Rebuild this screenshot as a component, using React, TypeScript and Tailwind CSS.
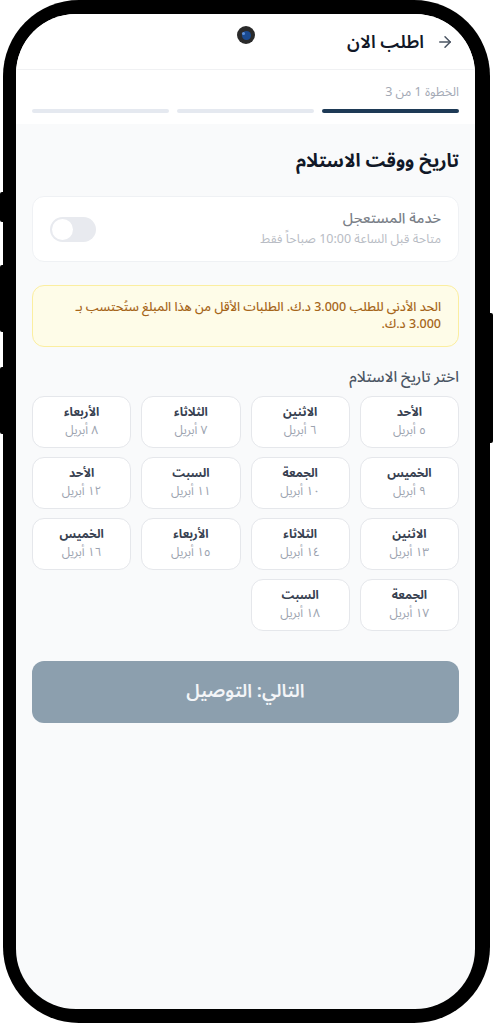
import React from "react";

const days: { d: string; n: string }[] = [
  { d: "الأحد", n: "٥ أبريل" },
  { d: "الاثنين", n: "٦ أبريل" },
  { d: "الثلاثاء", n: "٧ أبريل" },
  { d: "الأربعاء", n: "٨ أبريل" },
  { d: "الخميس", n: "٩ أبريل" },
  { d: "الجمعة", n: "١٠ أبريل" },
  { d: "السبت", n: "١١ أبريل" },
  { d: "الأحد", n: "١٢ أبريل" },
  { d: "الاثنين", n: "١٣ أبريل" },
  { d: "الثلاثاء", n: "١٤ أبريل" },
  { d: "الأربعاء", n: "١٥ أبريل" },
  { d: "الخميس", n: "١٦ أبريل" },
  { d: "الجمعة", n: "١٧ أبريل" },
  { d: "السبت", n: "١٨ أبريل" },
];

export default function App() {
  return (
    <div
      className="relative w-[493px] h-[1024px] bg-white overflow-hidden"
      style={{ fontFamily: '"Noto Sans Arabic", "Noto Sans", "DejaVu Sans", sans-serif' }}
    >
      {/* side buttons */}
      <div className="absolute left-0 top-[192px] w-[6px] h-[30px] bg-black rounded-l-[2px]" />
      <div className="absolute left-0 top-[265px] w-[6px] h-[67px] bg-black rounded-l-[2px]" />
      <div className="absolute left-0 top-[367px] w-[6px] h-[67px] bg-black rounded-l-[2px]" />
      <div className="absolute right-0 top-[313px] w-[6px] h-[130px] bg-black rounded-r-[2px]" />

      <div className="relative ml-[3px] w-[487px] h-[1023px] rounded-[76px] bg-black pt-[14px] pb-[14px] pl-[13px] pr-[15px]">
        <div dir="rtl" className="relative w-full h-full rounded-[60px] bg-[#f9fafb] overflow-hidden flex flex-col">
          {/* camera */}
          <div className="absolute left-[221px] top-[12px] w-[18px] h-[18px] rounded-full bg-[#2a2a2a] flex items-center justify-center z-10">
            <div className="w-[9px] h-[9px] rounded-full bg-[#1a4a8f] flex items-start justify-end">
              <div className="w-[3px] h-[3px] rounded-full bg-[#5b8fd8] mt-[1px] mr-[1px]" />
            </div>
          </div>

          {/* header */}
          <div className="h-[56px] bg-white border-b border-[#f0f1f3] flex items-center pr-[21px] gap-[12px] shrink-0">
            <svg width="18" height="18" viewBox="0 0 24 24" fill="none" stroke="#4b5563" strokeWidth="2" strokeLinecap="round" strokeLinejoin="round">
              <path d="M5 12h14" />
              <path d="M12 5l7 7-7 7" />
            </svg>
            <div className="text-[18px] font-semibold text-[#111827] leading-[24px]">اطلب الان</div>
          </div>

          {/* progress */}
          <div className="bg-white px-4 pt-[14px] pb-[11px] shrink-0">
            <div className="text-[12.5px] text-[#a3a9b5] leading-[16px]">الخطوة 1 من 3</div>
            <div className="mt-[9px] flex gap-2">
              <div className="flex-1 h-[4px] rounded-full bg-[#1e3a56]" />
              <div className="flex-1 h-[4px] rounded-full bg-[#e5e9f0]" />
              <div className="flex-1 h-[4px] rounded-full bg-[#e5e9f0]" />
            </div>
          </div>

          {/* body */}
          <div className="px-4 pt-[24px] flex flex-col">
            <h1 className="text-[18.5px] font-bold text-[#111827] leading-[28px]">تاريخ ووقت الاستلام</h1>

            <div className="mt-[20px] h-[66px] bg-white border border-[#eff1f4] rounded-[12px] flex items-center justify-between pr-[17px] pl-[17px]">
              <div className="flex flex-col">
                <div className="text-[14.5px] font-medium text-[#7a7f88] leading-[20px]">خدمة المستعجل</div>
                <div className="text-[12.5px] text-[#b8bcc4] leading-[19px] mt-[1px]">متاحة قبل الساعة 10:00 صباحاً فقط</div>
              </div>
              <div className="w-[46px] h-[25px] rounded-full bg-[#e8eaef] flex items-center justify-end pl-[2px]">
                <div className="w-[21px] h-[21px] rounded-full bg-white" />
              </div>
            </div>

            <div className="mt-[23px] bg-[#fefce8] border border-[#fbeea0] rounded-[12px] px-[17px] py-[13px]">
              <p className="text-[12.5px] font-medium text-[#a6661a] leading-[17px]">
                الحد الأدنى للطلب 3.000 د.ك. الطلبات الأقل من هذا المبلغ ستُحتسب بـ 3.000 د.ك.
              </p>
            </div>

            <div className="mt-[20px] text-[15px] font-medium text-[#4b5563] leading-[20px]">اختر تاريخ الاستلام</div>

            <div className="mt-[9px] grid grid-cols-4 gap-x-[10px] gap-y-[9px]">
              {days.map((x, i) => (
                <div
                  key={i}
                  className="h-[52px] bg-white border border-[#e5e7eb] rounded-[12px] flex flex-col items-center justify-center"
                >
                  <div className="text-[12px] font-bold text-[#374151] leading-[18px]">{x.d}</div>
                  <div className="text-[12px] text-[#9ca3af] leading-[18px]">{x.n}</div>
                </div>
              ))}
            </div>

            <button className="mt-[30px] h-[62px] w-full rounded-[12px] bg-[#8c9fae] text-[18.5px] font-semibold text-[#f3f5f8]">
              التالي: التوصيل
            </button>
          </div>
        </div>
      </div>
    </div>
  );
}
